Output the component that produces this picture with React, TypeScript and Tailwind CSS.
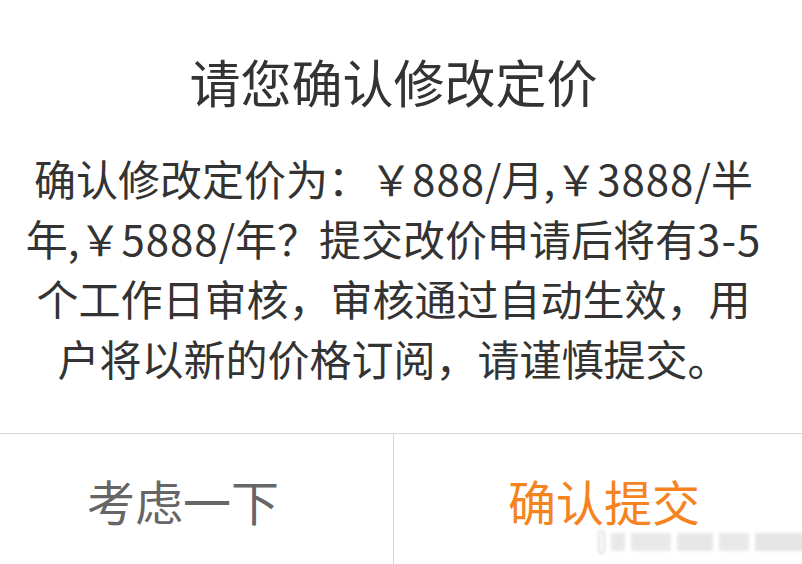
import React from 'react';

const FONT = '"Noto Sans CJK SC", "Noto Sans", sans-serif';

// numeric runs get a touch of extra spacing so prices read wider
const Num = ({ children }: { children: React.ReactNode }) => (
  <span className="tracking-[1px]">{children}</span>
);

export default function App() {
  return (
    <div className="relative w-[802px] h-[564px] overflow-hidden bg-white" style={{ fontFamily: FONT }}>
      {/* Dialog card, a little wider than the viewport */}
      <div className="w-[841px] ml-[-27px] bg-white flex flex-col">
        <div className="pt-[51px] text-center text-[51px] leading-[60px] text-[#333333]">请您确认修改定价</div>

        <div className="mt-[37px] pb-[45px] text-center text-[42px] leading-[60px] text-[#333333]">
          <div>
            确认修改定价为：￥<Num>888</Num>/月,￥<Num>3888</Num>/半
          </div>
          <div>
            年,￥<Num>5888</Num>/年？提交改价申请后将有<Num>3-5</Num>
          </div>
          <div>个工作日审核，审核通过自动生效，用</div>
          <div>户将以新的价格订阅，请谨慎提交。</div>
        </div>

        {/* Action buttons */}
        <div className="flex border-t border-[#d6d6d6] h-[132px]">
          <button className="flex-1 flex items-start justify-center pt-[38px] text-[48px] leading-[56px] text-[#666666] border-r border-[#d6d6d6]">
            考虑一下
          </button>
          <button className="flex-1 flex items-start justify-center pt-[38px] text-[48px] leading-[56px] text-[#f5831f]">
            确认提交
          </button>
        </div>
      </div>

      {/* Faded watermark */}
      <div className="absolute left-[598px] top-[530px] flex items-center gap-[6px] blur-[1.5px] opacity-50">
        <div className="w-[7px] h-[24px] border-2 border-[#c4c4c4] rounded-sm" />
        <div className="w-[14px] h-[18px] bg-[#d4d4d4]" />
        <div className="w-[40px] h-[18px] bg-[#d4d4d4]" />
        <div className="w-[36px] h-[18px] bg-[#d0d0d0]" />
        <div className="w-[30px] h-[18px] bg-[#d4d4d4]" />
        <div className="w-[50px] h-[18px] bg-[#cccccc]" />
      </div>
    </div>
  );
}
